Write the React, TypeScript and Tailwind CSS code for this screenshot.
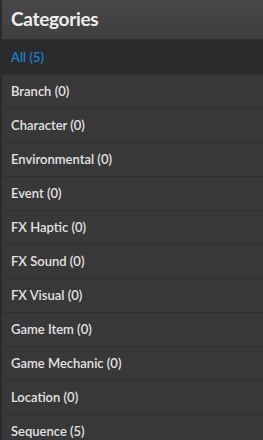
import React from "react";

const items = [
  "Branch (0)",
  "Character (0)",
  "Environmental (0)",
  "Event (0)",
  "FX Haptic (0)",
  "FX Sound (0)",
  "FX Visual (0)",
  "Game Item (0)",
  "Game Mechanic (0)",
  "Location (0)",
  "Sequence (5)",
];

export default function App() {
  return (
    <div className="w-[263px] h-[440px] overflow-hidden bg-[#383838] border-l-2 border-[#2b2b2b] font-['Lato',sans-serif]">
      <div className="h-[41px] bg-gradient-to-b from-[#474747] to-[#3f3f3f] border-b-2 border-[#2e2e2e] flex items-center px-[9px]">
        <span className="text-[19px] font-bold text-[#eeeeee] tracking-[-0.3px]">Categories</span>
      </div>
      <div className="h-[34px] bg-[#2b2b2b] flex items-center px-[9px] border-b border-[#303030] pt-[1px]">
        <span className="text-[13px] font-semibold text-[#1a7fd6]">All (5)</span>
      </div>
      {items.map((t) => (
        <div key={t} className="h-[34px] flex items-center px-[9px] border-b border-[#303030] pt-[1px]">
          <span className="text-[13px] font-semibold text-[#e2e2e2]">{t}</span>
        </div>
      ))}
    </div>
  );
}
